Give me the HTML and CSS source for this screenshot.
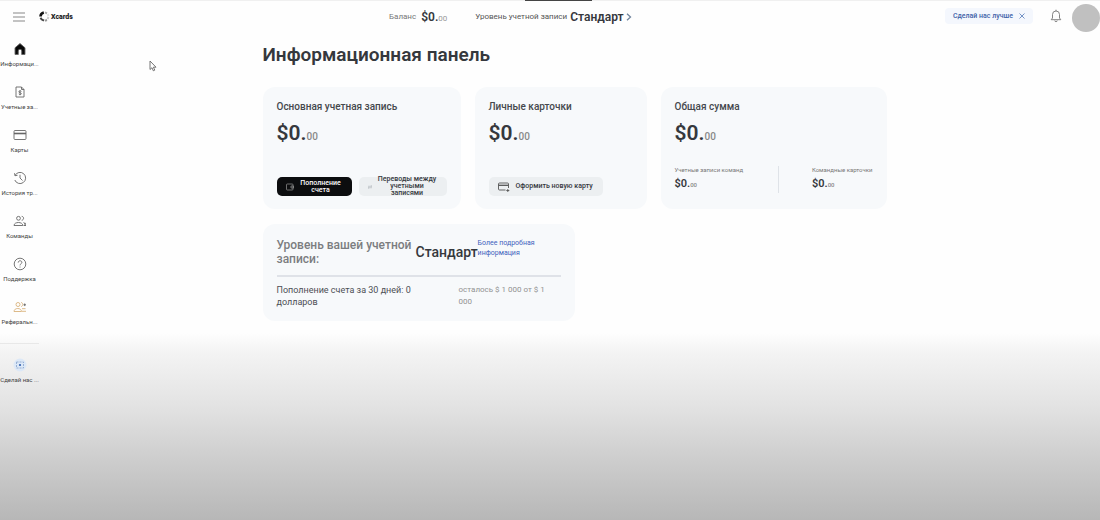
FILE: index.html
```html
<!DOCTYPE html>
<html lang="ru">
<head>
<meta charset="utf-8">
<meta name="viewport" content="width=device-width, initial-scale=1">
<title>Xcards</title>
<link rel="stylesheet" href="styles.css">
</head>
<body>
<div class="notch"></div>
<header class="topbar">
  <div class="brand">
    <button class="icon-button" type="button" aria-label="Меню">
      <svg width="12" height="10" viewBox="0 0 12 10" fill="none" stroke="#888" stroke-width="1"><path d="M0 1h12M0 5h12M0 9h12"/></svg>
    </button>
    <a class="logo" href="#">
      <svg width="11" height="11" viewBox="0 0 11 11" fill="none" stroke-width="2">
        <path d="M1.500 5.500A4.200 4.200 0 0 1 4.800 1.600" stroke="#111" stroke-width="2.600"/>
        <path d="M6 1.300l2 1" stroke="#aaa"/><path d="M8.700 3l.9 2" stroke="#e2e2e2"/>
        <path d="M9.500 6L8.600 8.200" stroke="#ccc"/><path d="M8 9l-2 .7" stroke="#999"/><path d="M5 9.700L2.500 8.300 1.500 6.800" stroke="#444"/>
      </svg>
      <span>Xcards</span>
    </a>
  </div>
  <div class="status">
    <div class="balance"><span>Баланс</span><span class="balance-sum">$0.<small>00</small></span></div>
    <a class="level-link" href="#"><span>Уровень учетной записи</span><b>Стандарт</b>
      <svg width="6" height="8" viewBox="0 0 6 8" fill="none" stroke="#70849d" stroke-width="1.300"><path d="M1 .8L4.500 4 1 7.200"/></svg>
    </a>
  </div>
  <div class="actions">
    <button class="improve" type="button"><span>Сделай нас лучше</span>
      <svg width="6" height="6" viewBox="0 0 6 6" stroke="#6587c0" stroke-width=".9"><path d="M.5.5l5 5M5.500.5l-5 5"/></svg>
    </button>
    <button class="icon-button" type="button" aria-label="Уведомления">
      <svg width="12" height="14" viewBox="0 0 12 14" fill="none" stroke="#777" stroke-width=".9"><path d="M1.200 10.700h9.600L9.500 9V5.500a3.500 3.500 0 0 0-7 0V9zM6 2V.7M4.800 11.500a1.200 1.200 0 0 0 2.400 0"/></svg>
    </button>
    <button class="avatar" type="button" aria-label="Профиль"></button>
  </div>
</header>
<div class="layout">
  <nav class="sidebar">
    <a class="nav-item" href="#">
      <svg viewBox="0 0 14 14"><path fill="#080808" d="M7 1.500l5 4.300v6.700H8.700V9a1.700 1.700 0 0 0-3.400 0v3.500H2V5.800z"/></svg>
      <span>Информаци...</span></a>
    <a class="nav-item" href="#">
      <svg viewBox="0 0 14 14"><path d="M3 2h5.500L11 4.500V12H3zM8.500 2v2.500H11"/><path d="M8.400 6.400C8 5.500 5.800 5.700 5.800 6.800c0 1.200 2.600.7 2.600 1.900 0 1-2.200 1.100-2.600.2M7 5.300v4.900"/></svg>
      <span>Учетные за...</span></a>
    <a class="nav-item" href="#">
      <svg viewBox="0 0 14 14"><rect x="1" y="2.500" width="12" height="9" rx="1"/><path d="M1 5.500h12" stroke-width="1.600"/></svg>
      <span>Карты</span></a>
    <a class="nav-item" href="#">
      <svg viewBox="0 0 14 14"><path d="M2 4.500A5.600 5.600 0 1 1 1.800 9M1.500 2.200L2 4.700l2.500-.4M7 3.800V7l2.500 2.500"/></svg>
      <span>История тр...</span></a>
    <a class="nav-item" href="#">
      <svg viewBox="0 0 14 14"><circle cx="5.500" cy="4.300" r="1.900"/><path d="M1 11.500c0-4 8.800-4 8.800 0zM8.700 2.300c2.500.2 2.500 3.700 0 4M10.500 8.500l2.500 1.800M12 8.800v3M10.600 11.500H13"/></svg>
      <span>Команды</span></a>
    <a class="nav-item" href="#">
      <svg viewBox="0 0 14 14"><circle cx="7" cy="7" r="5.800"/><path d="M5.200 5.600c0-2.500 3.700-2.300 3.700-.2C8.900 6.800 7 6.700 7 8.400M7 9.600v.9"/></svg>
      <span>Поддержка</span></a>
    <a class="nav-item referral" href="#">
      <svg viewBox="0 0 14 14"><circle cx="5" cy="4.500" r="2"/><path d="M1 11.500c0-4 7.500-4 7.500 0zM8 2.500c2.400.2 2.400 3.700 0 4M9 8.700h3.500M9 11.300h4"/><path stroke="#666" d="M10.500 4.800h2.500M11.700 3.500v2.600"/></svg>
      <span>Реферальн...</span></a>
    <a class="nav-item nav-last" href="#">
      <svg viewBox="0 0 14 14"><circle cx="7" cy="7" r="6.500" fill="#dce8f7" stroke="none"/><rect x="3.500" y="4" width="7" height="6" stroke="#8eaad0" stroke-dasharray="2 1"/><circle cx="7" cy="7" r="1.100" fill="#315fae" stroke="none"/></svg>
      <span>Сделай нас ...</span></a>
  </nav>
  <main class="content">
    <h1>Информационная панель</h1>
    <div class="cards">
      <section class="card">
        <h2>Основная учетная запись</h2>
        <p class="sum">$0.<small>00</small></p>
        <div class="buttons">
          <button class="button button-dark" type="button">
            <svg width="8" height="8" viewBox="0 0 8 8" fill="none" stroke="#999" stroke-width=".7"><rect x=".5" y="1" width="6.500" height="6" rx=".8"/><path d="M7.500 3H5v2h2.500z"/></svg>
            <span>Пополнение счета</span></button>
          <button class="button button-transfer" type="button">
            <svg width="4" height="4" viewBox="0 0 4 4" fill="none" stroke="#b5babf" stroke-width=".7"><path d="M0 1.300h4L2.800.3M4 2.700H0l1.200 1"/></svg>
            <span>Переводы между учетными записями</span></button>
        </div>
      </section>
      <section class="card">
        <h2>Личные карточки</h2>
        <p class="sum">$0.<small>00</small></p>
        <div class="buttons">
          <button class="button button-new" type="button">
            <svg width="12" height="10" viewBox="0 0 12 10" fill="none" stroke="#555" stroke-width=".9"><path d="M7.500 8H1.500Q.5 8 .5 7V2Q.5 1 1.500 1h8q1 0 1 1v4M9.800 7v3M8.300 8.500h3"/><path d="M.5 3.300h10" stroke-width="1.300"/></svg>
            <span>Оформить новую карту</span></button>
        </div>
      </section>
      <section class="card">
        <h2>Общая сумма</h2>
        <p class="sum">$0.<small>00</small></p>
        <div class="totals">
          <div class="total"><h3>Учетные записи команд</h3><p>$0.<small>00</small></p></div>
          <div class="total total-right"><h3>Командные карточки</h3><p>$0.<small>00</small></p></div>
        </div>
      </section>
    </div>
    <section class="card level-card">
      <div class="level-head">
        <h2>Уровень вашей учетной записи:</h2>
        <strong>Стандарт</strong>
        <a href="#">Более подробная информация</a>
      </div>
      <div class="track"></div>
      <div class="level-foot"><p>Пополнение счета за 30 дней: 0 долларов</p><p class="remain">осталось $ 1 000 от $ 1 000</p></div>
    </section>
  </main>
</div>
<svg class="pointer" width="8" height="12" viewBox="0 0 8 12" fill="#fff" stroke="#666" stroke-width=".9"><path d="M1 1v8.500l2-1.800 1.300 3.100 1.500-.7-1.400-2.900H7z"/></svg>
</body>
</html>
```
FILE: styles.css
```css
* { box-sizing: border-box; }
html { min-height: 100%; background: #fff; }
body {
  margin: 0;
  min-height: 100vh;
  font-family: Roboto, "Liberation Sans", sans-serif;
  color: #35383d;
  background: linear-gradient(to bottom, #fefefe 64%, #f3f3f3 68%, #e3e3e3 78%, #cecece 88%, #b7b7b7 100%);
}
h1, h2, h3, p { margin: 0; }
a { color: inherit; text-decoration: none; }
button { font: inherit; color: inherit; border: 0; padding: 0; background: none; cursor: pointer; }
svg { flex: none; display: block; }

.notch {
  position: absolute;
  top: 0;
  left: 50%;
  width: 67px;
  height: 1px;
  margin-left: -25px;
  background: #444;
}
.topbar {
  display: flex;
  align-items: center;
  height: 36px;
  padding-bottom: 4px;
  border-top: 1px solid #f0f0f0;
}
.brand { display: flex; align-items: center; gap: 14px; width: 389px; padding-left: 13px; }
.logo { display: flex; align-items: center; gap: 1px; font-size: 7px; font-weight: 900; color: #222; }
.status { display: flex; align-items: center; gap: 28px; font-size: 8px; color: #777; }
.balance, .level-link { display: flex; align-items: center; }
.balance { gap: 5px; }
.balance-sum { font-size: 12px; font-weight: 600; color: #35383d; }
.balance-sum small { font-size: 8px; font-weight: 400; color: #999; }
.level-link { gap: 3px; color: #555; }
.level-link b { font-size: 12px; font-weight: 600; color: #35383d; }
.level-link svg { margin-left: -1px; }
.actions { display: flex; align-items: center; margin-left: auto; gap: 17px; height: 34px; padding-top: 2px; }
.improve {
  display: flex;
  align-items: center;
  gap: 6px;
  height: 16px;
  margin-bottom: 3px;
  padding: 0 8px;
  border-radius: 4px;
  background: #f4f7fd;
  font-size: 7px;
  font-weight: 500;
  color: #3f62a8;
}
.actions .icon-button { margin-bottom: 3px; }
.avatar { width: 28px; height: 28px; margin-left: -7px; border-radius: 50%; background: #c0c0c0; }

.layout { display: flex; }
.sidebar { flex: none; width: 49px; padding-top: 6px; }
.nav-item {
  display: flex;
  flex-direction: column;
  align-items: center;
  gap: 4px;
  width: 39px;
  height: 43px;
  font-size: 6px;
  line-height: 8px;
  white-space: nowrap;
  color: #444;
}
.nav-item svg { width: 14px; height: 14px; fill: none; stroke: #666; stroke-width: .9; }
.nav-item.referral svg { stroke: #d9b27c; }
.nav-last { height: 60px; padding-top: 14px; border-top: 1px solid #e8e8e8; }

.content { flex: 1; max-width: 624px; margin: 0 auto; }
h1 { margin-top: 7px; font-size: 19px; line-height: 24px; font-weight: 600; }
.cards { display: grid; grid-template-columns: 197fr 172fr 226fr; gap: 14px; margin: 20px 0 15px; }
.card {
  display: flex;
  flex-direction: column;
  min-height: 122px;
  padding: 13px 14px;
  border-radius: 12px;
  background: #f7f9fb;
}
.card h2 { font-size: 10px; line-height: 13px; font-weight: 500; color: #45484d; }
.sum { margin-top: 7px; font-size: 21px; line-height: 26px; font-weight: 600; }
.sum small { font-size: 10px; font-weight: 500; color: #888; }
.buttons { display: flex; gap: 7px; margin-top: auto; }
.button {
  display: flex;
  align-items: center;
  justify-content: center;
  height: 19px;
  border-radius: 5px;
  background: #eceff1;
  font-size: 7px;
  line-height: 7px;
  font-weight: 500;
}
.button-dark { width: 75px; padding: 0 6px 0 9px; gap: 2px; background: #0c0d0f; color: #fff; }
.button-transfer { width: 88px; padding: 0 9px; gap: 5px; }
.button-new { width: 114px; gap: 5px; }
.totals { display: flex; justify-content: space-between; margin-top: auto; padding-bottom: 3px; }
.total h3 { font-size: 6px; line-height: 7px; font-weight: 400; color: #777; }
.total p { margin-top: 4px; padding-bottom: 2px; font-size: 11px; line-height: 13px; font-weight: 600; }
.total small { font-size: 6px; font-weight: 500; color: #888; }
.total:first-child { flex: 0 0 104px; border-right: 1px solid #dfe3e8; }

.level-card { width: 50%; min-height: 97px; }
.level-card h2 { flex: 0 0 139px; font-size: 12px; line-height: 14px; font-weight: 500; color: #7b7d80; }
.level-head { display: flex; align-items: center; padding-top: 1px; }
.level-head strong { font-size: 14px; line-height: 18px; font-weight: 500; }
.level-head a { flex: 0 0 70px; align-self: flex-start; font-size: 7px; line-height: 10px; color: #4263bd; }
.track { height: 2px; margin: 9px 0 7px; background: #dfe2e8; }
.level-foot { display: flex; justify-content: space-between; font-size: 9px; line-height: 12px; color: #4c4f54; }
.level-foot p { width: 160px; }
.level-foot .remain { width: 102px; padding-right: 10px; font-size: 8px; color: #929292; }

.pointer { position: absolute; left: 149px; top: 60px; }
```
